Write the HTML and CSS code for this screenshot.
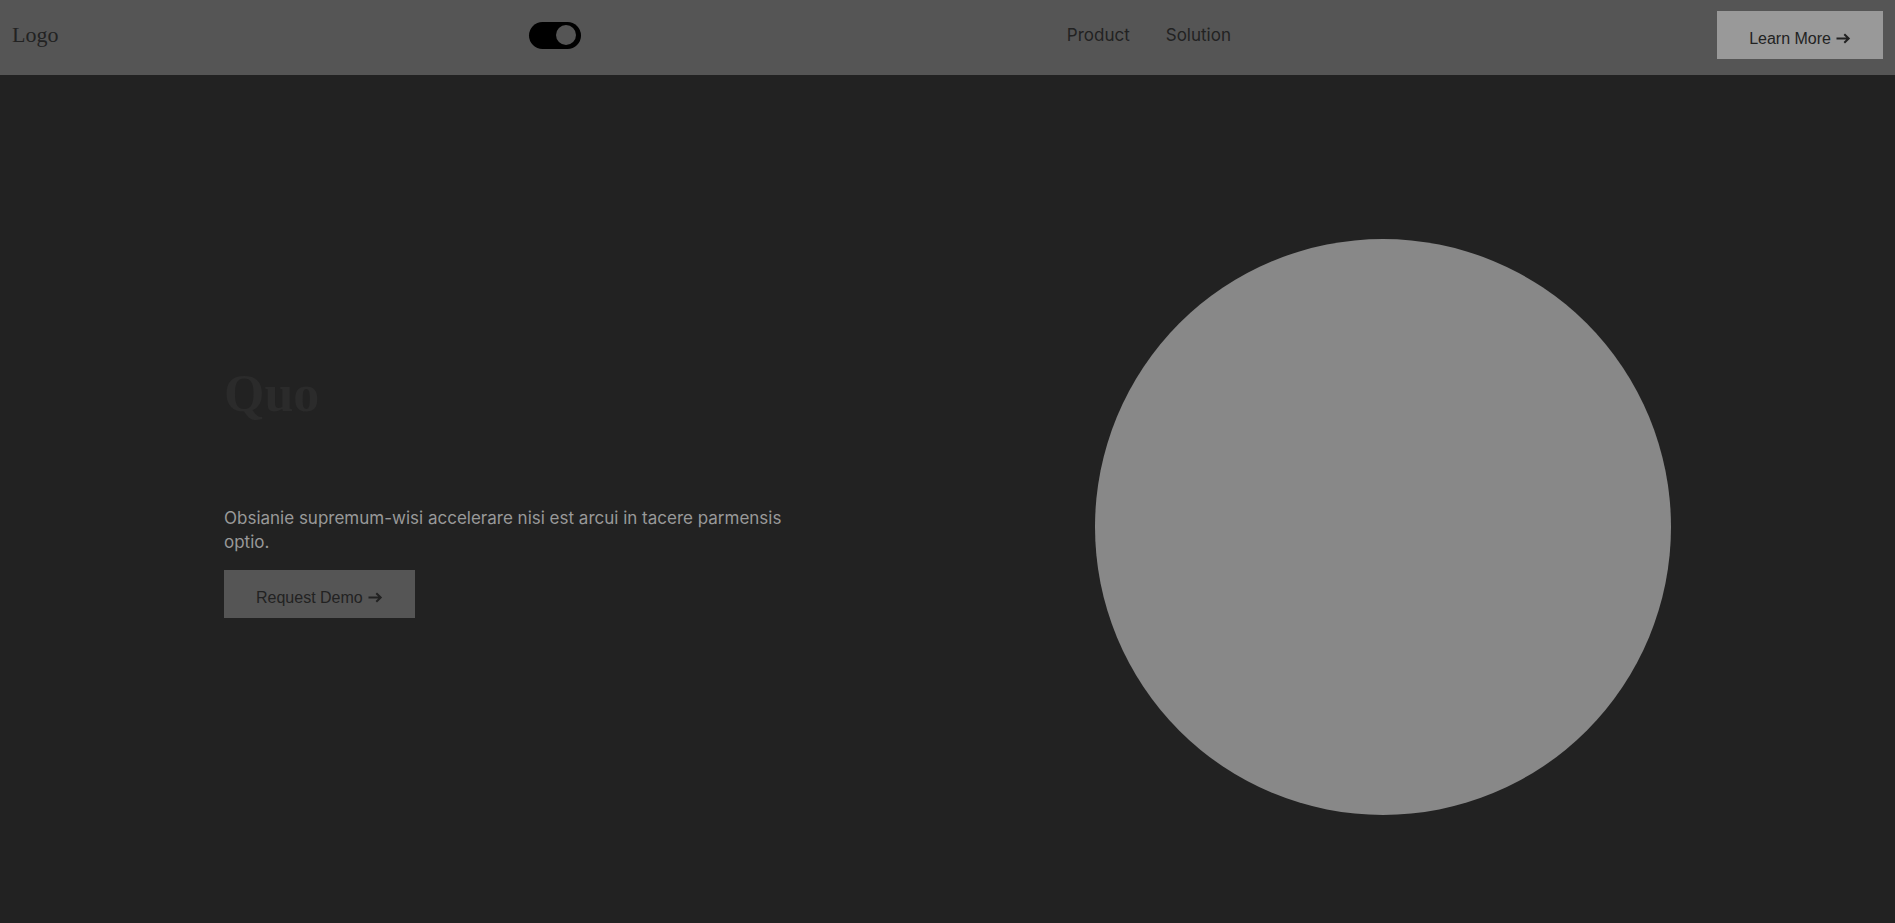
FILE: index.html
```html
<!DOCTYPE html>
<html lang="en">
<head>
<meta charset="utf-8">
<title>Quo</title>
<link rel="stylesheet" href="styles.css">
</head>
<body>
<header class="header">
  <a class="logo" href="#">Logo</a>
  <input class="switch" type="checkbox" role="switch" aria-label="Dark mode" checked>
  <nav class="nav">
    <a class="nav-link" href="#">Product</a>
    <a class="nav-link" href="#">Solution</a>
  </nav>
  <button class="button button-light" type="button">Learn More
    <svg class="arrow" viewBox="0 0 16 16" aria-hidden="true"><path d="M1.5 7.5H13.5M9.3 3.3L13.7 7.5L9.3 11.7"/></svg>
  </button>
</header>
<main class="hero">
  <section class="intro">
    <h1 class="title">Quo</h1>
    <p class="text">Obsianie supremum-wisi accelerare nisi est arcui in tacere parmensis optio.</p>
    <button class="button" type="button">Request Demo
      <svg class="arrow" viewBox="0 0 16 16" aria-hidden="true"><path d="M1.5 7.5H13.5M9.3 3.3L13.7 7.5L9.3 11.7"/></svg>
    </button>
  </section>
  <div class="disc"></div>
</main>
</body>
</html>
```

FILE: styles.css
```css
* {
  box-sizing: border-box;
}

body {
  margin: 0;
  min-height: 100vh;
  display: flex;
  flex-direction: column;
  background: #222;
  color: #222;
  font: 17px/24px Inter, "Open Sans", sans-serif;
}

.header {
  display: flex;
  justify-content: space-between;
  align-items: center;
  padding: 11px 12px 16px;
  background: #555;
}

.logo {
  font: 22px/24px "Liberation Serif", serif;
  color: #222;
  text-decoration: none;
}

.switch {
  appearance: none;
  display: flex;
  justify-content: flex-end;
  align-items: center;
  width: 52px;
  height: 27px;
  margin: 0;
  padding: 0 5px;
  border-radius: 14px;
  background: #000;
}

.switch::before {
  content: "";
  width: 20px;
  height: 20px;
  border-radius: 50%;
  background: #555;
}

.switch:not(:checked) {
  justify-content: flex-start;
}

.nav {
  display: flex;
  gap: 36px;
  padding: 0 16px;
}

.nav-link {
  color: #222;
  text-decoration: none;
}

.button {
  display: inline-flex;
  align-items: center;
  gap: 4px;
  padding: 19px 32px 11px;
  border: 0;
  background: #555;
  color: #222;
  font: 16px/18px "Liberation Sans", Arial, sans-serif;
}

.button-light {
  background: #999;
}

.arrow {
  width: 16px;
  height: 16px;
  fill: none;
  stroke: currentColor;
  stroke-width: 2;
}

.hero {
  flex: 1;
  display: flex;
  justify-content: space-between;
  align-items: center;
  gap: 32px;
  padding: 56px 224px 0;
}

.intro {
  max-width: 568px;
  padding-bottom: 74px;
}

.title {
  margin: 0 0 80px;
  color: #2b2b2b;
  font: bold 52px/64px "Liberation Serif", serif;
}

.text {
  margin: 0 0 16px;
  color: #999;
}

.disc {
  flex: none;
  width: 576px;
  aspect-ratio: 1;
  border-radius: 50%;
  background: #888;
}
```
